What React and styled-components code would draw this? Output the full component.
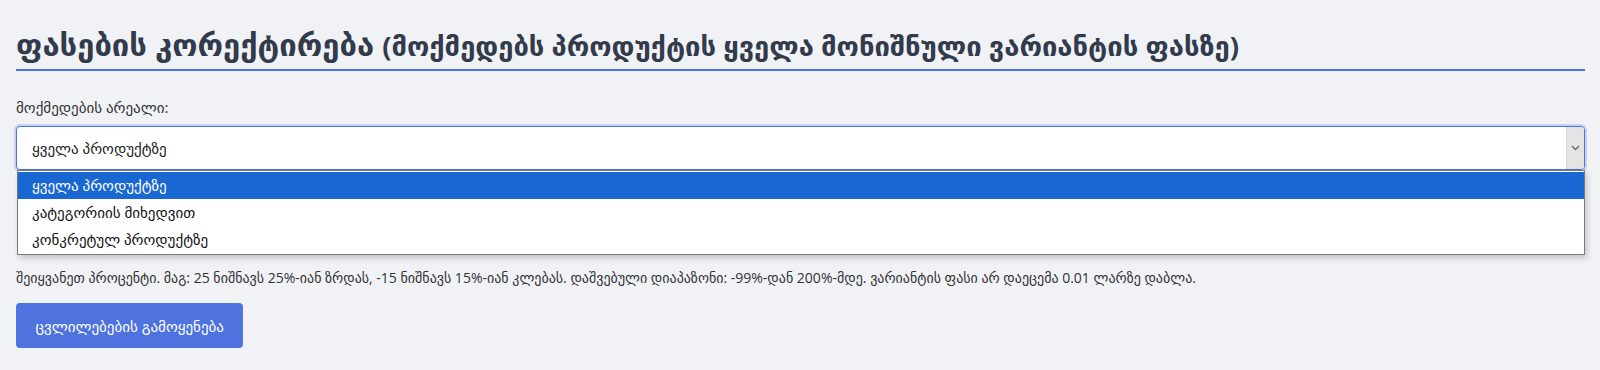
import React, { useState } from 'react';
import styled, { createGlobalStyle } from 'styled-components';

const GlobalStyle = createGlobalStyle`
    body {
        margin: 0;
        background-color: #f0f2f6;
        font-family: "Open Sans", "DejaVu Sans", sans-serif;
        color: #333;
    }
`

const Page = styled.div`
    padding: 16px 15px 16px 16px;
`

const Title = styled.h2`
    margin: 0;
    padding: 10px 0 5px;
    font-size: 31px;
    line-height: 37px;
    font-weight: 700;
    color: #323b4c;
    border-bottom: 2px solid #4e73df;
`

const Note = styled.span`
    font-size: 27.4px;
`

const Field = styled.div`
    margin-top: 27px;
`

const Label = styled.label`
    display: block;
    font-size: 15px;
    line-height: 18px;
    margin-bottom: 10px;
`

const SelectWrap = styled.div`
    position: relative;
`

const SelectBox = styled.div`
    display: flex;
    align-items: center;
    height: 44px;
    box-sizing: border-box;
    background: #fff;
    border: 1px solid #4e73df;
    border-radius: 4px;
    box-shadow: 0 0 0 2px rgba(78, 115, 223, 0.25);
    overflow: hidden;
`

const Current = styled.span`
    flex: 1;
    padding-left: 15px;
    font-size: 15px;
    color: #222;
`

const Arrow = styled.span`
    width: 17px;
    align-self: stretch;
    display: flex;
    align-items: center;
    justify-content: center;
    background: #e4e4e4;
    border-left: 1px solid #d8d8d8;
`

const Options = styled.ul`
    position: absolute;
    top: 44px;
    left: 1px;
    right: 0;
    margin: 0;
    padding: 1px 0;
    list-style: none;
    background: #fff;
    border: 1px solid #7a7a7a;
    box-shadow: 2px 3px 6px rgba(0, 0, 0, 0.2);
    z-index: 2;
`

const Option = styled.li`
    height: 27px;
    line-height: 27px;
    padding-left: 14px;
    font-size: 15px;
    color: ${props => props.active ? '#fff' : '#111'};
    background: ${props => props.active ? '#1967d2' : 'transparent'};
`

const Help = styled.p`
    margin: 0;
    padding-top: 98px;
    font-size: 14px;
    line-height: 19px;
    color: #333;
`

const Button = styled.button`
    margin-top: 16px;
    height: 45px;
    padding: 0 19.5px;
    border: 0;
    border-radius: 4px;
    background-color: #4e73df;
    color: #fff;
    font-family: inherit;
    font-size: 15px;
    cursor: pointer;
`

const options = ['ყველა პროდუქტზე', 'კატეგორიის მიხედვით', 'კონკრეტულ პროდუქტზე']

const App = () => {
    const [selected] = useState(0)

    return (
        <Page>
            <GlobalStyle />
            <Title>
                ფასების კორექტირება <Note>(მოქმედებს პროდუქტის ყველა მონიშნული ვარიანტის ფასზე)</Note>
            </Title>

            <Field>
                <Label>მოქმედების არეალი:</Label>
                <SelectWrap>
                    <SelectBox>
                        <Current>{options[selected]}</Current>
                        <Arrow>
                            <svg width="9" height="6" viewBox="0 0 9 6">
                                <path d="M1 1l3.5 3.5L8 1" fill="none" stroke="#666" strokeWidth="1.3" />
                            </svg>
                        </Arrow>
                    </SelectBox>
                    <Options>
                        {options.map((o, i) => (
                            <Option key={o} active={i === selected}>{o}</Option>
                        ))}
                    </Options>
                </SelectWrap>
            </Field>

            <Help>
                შეიყვანეთ პროცენტი. მაგ: 25 ნიშნავს 25%-იან ზრდას, -15 ნიშნავს 15%-იან კლებას. დაშვებული დიაპაზონი: -99%-დან 200%-მდე. ვარიანტის ფასი არ დაეცემა 0.01 ლარზე დაბლა.
            </Help>

            <Button>ცვლილებების გამოყენება</Button>
        </Page>
    );
};

export default App;
